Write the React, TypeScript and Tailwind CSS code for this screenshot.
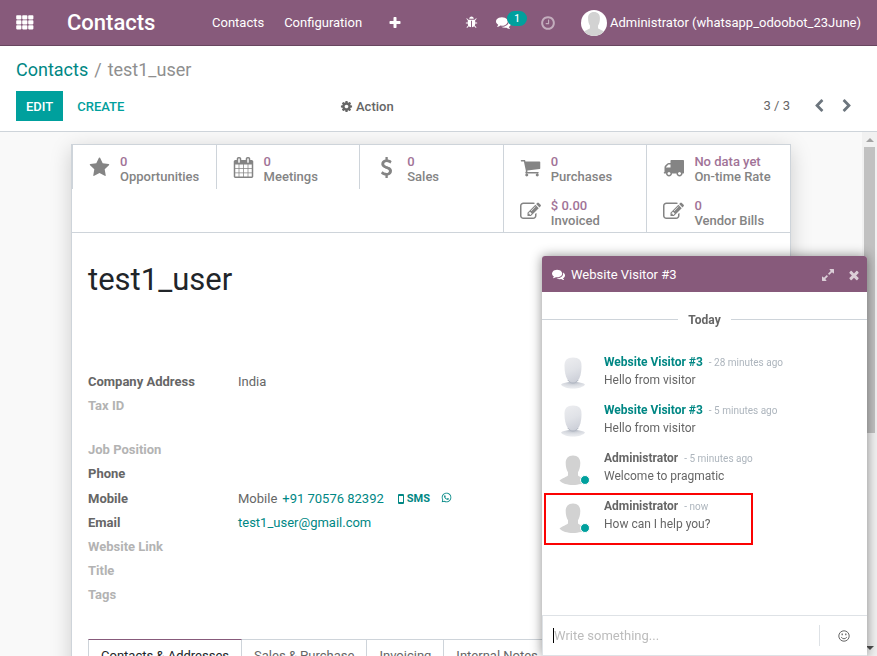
import React, { useId } from "react";
import { FaWhatsapp } from "react-icons/fa";

const ICONS = {
  star: "M1728 647q0 22-26 48l-363 354 86 500q1 7 1 20 0 21-10.5 35.5t-30.5 14.5q-19 0-40-12l-449-236-449 236q-22 12-40 12-21 0-31.5-14.5t-10.5-35.5q0-6 2-20l86-500-364-354q-25-27-25-48 0-37 56-46l502-73 225-455q19-41 49-41t49 41l225 455 502 73q56 9 56 46z",
  comments:
    "M1408 768q0 139-94 257t-256.5 186.5-353.5 68.5q-86 0-176-16-124 88-278 128-36 9-86 16h-3q-11 0-20.5-8t-11.5-21q-1-3-1-6.5t.5-6.5 2-6l2.5-5 3.5-5.5 4-5 4.5-5 4-4.5q5-6 23-25t26-29.5 22.5-29 25-38.5 20.5-44q-124-72-195-177t-71-224q0-139 94-257t256.5-186.5 353.5-68.5 353.5 68.5 256.5 186.5 94 257zm384 256q0 120-71 224.5t-195 176.5q10 24 20.5 44t25 38.5 22.5 29 26 29.5 23 25q1 1 4 4.5t4.5 5 4 5 3.5 5.5l2.5 5 2 6 .5 6.5-1 6.5q-3 14-13 22t-22 7q-50-7-86-16-154-40-278-128-90 16-176 16-271 0-472-132 58 4 88 4 161 0 309-45t264-129q125-92 192-212t67-254q0-77-23-152 129 71 204 178t75 230z",
  plus: "M1600 736v192q0 40-28 68t-68 28h-416v416q0 40-28 68t-68 28h-192q-40 0-68-28t-28-68v-416h-416q-40 0-68-28t-28-68v-192q0-40 28-68t68-28h416v-416q0-40 28-68t68-28h192q40 0 68 28t28 68v416h416q40 0 68 28t28 68z",
  clock:
    "M1024 544v448q0 14-9 23t-23 9h-320q-14 0-23-9t-9-23v-64q0-14 9-23t23-9h224v-352q0-14 9-23t23-9h64q14 0 23 9t9 23zm416 352q0-148-73-273t-198-198-273-73-273 73-198 198-73 273 73 273 198 198 273 73 273-73 198-198 73-273zm224 0q0 209-103 385.5t-279.5 279.5-385.5 103-385.5-103-279.5-279.5-103-385.5 103-385.5 279.5-279.5 385.5-103 385.5 103 279.5 279.5 103 385.5z",
  cog: "M1152 896q0-106-75-181t-181-75-181 75-75 181 75 181 181 75 181-75 75-181zm512-109v222q0 12-8 23t-20 13l-185 28q-19 54-39 91 35 50 107 138 10 12 10 25t-9 23q-27 37-99 108t-94 71q-12 0-26-9l-138-108q-44 23-91 38-16 136-29 186-7 28-36 28h-222q-14 0-24.5-8.5t-11.5-21.5l-28-184q-49-16-90-37l-141 107q-10 9-25 9-14 0-25-11-126-114-165-168-7-10-7-23 0-12 8-23 15-21 51-66.5t54-70.5q-27-50-41-99l-183-27q-13-2-21-12.5t-8-23.5v-222q0-12 8-23t19-13l186-28q14-46 39-92-40-57-107-138-10-12-10-24 0-10 9-23 26-36 98.5-107.5t94.5-71.5q13 0 26 10l138 107q44-23 91-38 16-136 29-186 7-28 36-28h222q14 0 24.5 8.5t11.5 21.5l28 184q49 16 90 37l142-107q9-9 24-9 13 0 25 10 129 119 165 170 7 8 7 22 0 12-8 23-15 21-51 66.5t-54 70.5q26 50 41 98l183 28q13 2 21 12.5t8 23.5z",
  left: "M1427 301l-531 531 531 531q19 19 19 45t-19 45l-166 166q-19 19-45 19t-45-19l-742-742q-19-19-19-45t19-45l742-742q19-19 45-19t45 19l166 166q19 19 19 45t-19 45z",
  right:
    "M1363 877l-742 742q-19 19-45 19t-45-19l-166-166q-19-19-19-45t19-45l531-531-531-531q-19-19-19-45t19-45l166-166q19-19 45-19t45 19l742 742q19 19 19 45t-19 45z",
  times:
    "M1490 1322q0 40-28 68l-136 136q-28 28-68 28t-68-28l-294-294-294 294q-28 28-68 28t-68-28l-136-136q-28-28-28-68t28-68l294-294-294-294q-28-28-28-68t28-68l136-136q28-28 68-28t68 28l294 294 294-294q28-28 68-28t68 28l136 136q28 28 28 68t-28 68l-294 294 294 294q28 28 28 68z",
  expand:
    "M883 1056q0 13-10 23l-332 332 144 144q19 19 19 45t-19 45-45 19h-448q-26 0-45-19t-19-45v-448q0-26 19-45t45-19 45 19l144 144 332-332q10-10 23-10t23 10l114 114q10 10 10 23zm781-864v448q0 26-19 45t-45 19-45-19l-144-144-332 332q-10 10-23 10t-23-10l-114-114q-10-10-10-23t10-23l332-332-144-144q-19-19-19-45t19-45 45-19h448q26 0 45 19t19 45z",
  cart: "M704 1536q0 52-38 90t-90 38-90-38-38-90 38-90 90-38 90 38 38 90zm896 0q0 52-38 90t-90 38-90-38-38-90 38-90 90-38 90 38 38 90zm128-1088v512q0 24-16.5 42.5t-40.5 21.5l-1044 122q13 60 13 70 0 16-24 64h920q26 0 45 19t19 45-19 45-45 19h-1024q-26 0-45-19t-19-45q0-11 8-31.5t16-36 21.5-40 15.5-29.5l-177-823h-204q-26 0-45-19t-19-45 19-45 45-19h256q16 0 28.5 6.5t19.5 15.5 13 24.5 8 26 5.5 29.5 4.5 26h1201q26 0 45 19t19 45z",
  truck:
    "M640 1408q0-52-38-90t-90-38-90 38-38 90 38 90 90 38 90-38 38-90zm-384-512h384v-256h-158q-13 0-22 9l-195 195q-9 9-9 22v30zm1280 512q0-52-38-90t-90-38-90 38-38 90 38 90 90 38 90-38 38-90zm256-1088v1024q0 15-4 26.5t-13.5 18.5-16.5 11.5-23.5 6-22.5 2-25.5 0-22.5-.5q0 106-75 181t-181 75-181-75-75-181h-384q0 106-75 181t-181 75-181-75-75-181h-64q-3 0-22.5.5t-25.5 0-22.5-2-23.5-6-16.5-11.5-13.5-18.5-4-26.5q0-26 19-45t45-19v-320q0-8-.5-35t0-38 2.5-34.5 6.5-37 14-30.5 22.5-30l198-198q19-19 50.5-32t58.5-13h160v-192q0-26 19-45t45-19h1024q26 0 45 19t19 45z",
  edit: "M888 1184l116-116-152-152-116 116v56h96v96h56zm440-720q-16-16-33 1l-350 350q-17 17-1 33t33-1l350-350q17-17 1-33zm80 594v190q0 119-84.5 203.5t-203.5 84.5h-832q-119 0-203.5-84.5t-84.5-203.5v-832q0-119 84.5-203.5t203.5-84.5h832q63 0 117 25 15 7 18 23 3 17-9 29l-49 49q-14 14-32 8-23-6-45-6h-832q-66 0-113 47t-47 113v832q0 66 47 113t113 47h832q66 0 113-47t47-113v-126q0-13 9-22l64-64q15-15 35-7t20 29zm-96-738l288 288-672 672h-288v-288zm444 132l-92 92-288-288 92-92q28-28 68-28t68 28l152 152q28 28 28 68t-28 68z",
  calendar:
    "M192 1664h288v-288h-288v288zm352 0h320v-288h-320v288zm-352-352h288v-320h-288v320zm352 0h320v-320h-320v320zm-352-384h288v-288h-288v288zm736 736h320v-288h-320v288zm-384-736h320v-288h-320v288zm768 736h288v-288h-288v288zm-384-352h320v-320h-320v320zm-352-864v-288q0-13-9.5-22.5t-22.5-9.5h-64q-13 0-22.5 9.5t-9.5 22.5v288q0 13 9.5 22.5t22.5 9.5h64q13 0 22.5-9.5t9.5-22.5zm736 864h288v-320h-288v320zm-384-384h320v-288h-320v288zm384 0h288v-288h-288v288zm32-480v-288q0-13-9.5-22.5t-22.5-9.5h-64q-13 0-22.5 9.5t-9.5 22.5v288q0 13 9.5 22.5t22.5 9.5h64q13 0 22.5-9.5t9.5-22.5zm384-64v1280q0 52-38 90t-90 38h-1408q-52 0-90-38t-38-90v-1280q0-52 38-90t90-38h128v-96q0-66 47-113t113-47h64q66 0 113 47t47 113v96h384v-96q0-66 47-113t113-47h64q66 0 113 47t47 113v96h128q52 0 90 38t38 90z",
  dollar:
    "M1362 1185q0 153-99.5 263.5t-258.5 136.5v175q0 14-9 23t-23 9h-135q-13 0-22.5-9.5t-9.5-22.5v-175q-66-9-127.5-31t-101.5-44.5-74-48-46.5-37.5-17.5-18q-17-21-2-41l103-135q7-10 23-12 15-2 24 9l2 2q113 99 243 125 37 8 74 8 81 0 142.5-43t61.5-122q0-28-15-53t-33.5-42-58.5-37.5-66-32-80-32.5q-39-16-61.5-25t-61.5-26.5-62.5-31-56.5-35.5-53.5-42.5-43.5-49-35.5-58-21-66.5-8.5-78q0-138 98-242t255-134v-180q0-13 9.5-22.5t22.5-9.5h135q14 0 23 9t9 23v176q57 6 110.5 23t87 33.5 63.5 37.5 39 29 15 14q17 18 5 38l-81 146q-8 15-23 16-14 3-27-7-3-3-14.5-12t-39-26.5-58.5-32-74.5-26-85.5-11.5q-95 0-155 43t-60 111q0 26 8.5 48t29.5 41.5 39.5 33 56 31 60.5 27 70 27.5q53 20 81 31.5t76 35 75.5 42.5 62 50 53 63.5 31.5 76.5 13 94z",
  bug: "M1696 960q0 26-19 45t-45 19h-224q0 171-67 290l208 209q19 19 19 45t-19 45q-18 19-45 19t-45-19l-198-197q-5 5-15 13t-42 28.5-65 36.5-82 29-97 13v-896h-128v896q-51 0-101.5-13.5t-87-33-66-39-43.5-32.5l-15-14-183 207q-20 21-48 21-24 0-43-16-19-18-20.5-44.5t15.5-46.5l202-227q-58-114-58-274h-224q-26 0-45-19t-19-45 19-45 45-19h224v-294l-173-173q-19-19-19-45t19-45 45-19 45 19l173 173h844l173-173q19-19 45-19t45 19 19 45-19 45l-173 173v294h224q26 0 45 19t19 45zm-480-576h-640q0-133 93.5-226.5t226.5-93.5 226.5 93.5 93.5 226.5z",
};

function Icon({ name, className }: { name: keyof typeof ICONS; className: string }) {
  return (
    <svg viewBox="0 0 1792 1792" className={`shrink-0 overflow-visible ${className}`} fill="currentColor" aria-hidden="true">
      <path d={ICONS[name]} />
    </svg>
  );
}

function AppsIcon() {
  return (
    <svg viewBox="0 0 18 15" className="h-[15px] w-[18px]" fill="currentColor" aria-hidden="true">
      {[0, 5, 10].map((y) =>
        [0, 6, 12].map((x) => <rect key={`${x}-${y}`} x={x + 0.2} y={y + 0.2} width="5.2" height="4.2" rx="0.8" />)
      )}
    </svg>
  );
}

function UserAvatar({ className }: { className: string }) {
  return (
    <svg viewBox="0 0 32 32" className={className} fill="#d2d2d2" aria-hidden="true">
      <path d="M16 2.500c4.800 0 7.300 3 7.300 7.500 0 3.700-1 7.300-2.300 9.200v3.300c1.200 1.500 6 2.600 8.500 5C27 30.500 21.500 32 16 32S5 30.500 2.500 27.500c2.500-2.400 7.300-3.500 8.500-5v-3.300C9.600 17.300 8.700 13.700 8.700 10c0-4.500 2.500-7.500 7.300-7.500z" />
    </svg>
  );
}

function VisitorAvatar() {
  const id = useId();
  return (
    <svg viewBox="0 0 32 34" className="h-[34px] w-8" aria-hidden="true">
      <defs>
        <linearGradient id={`${id}h`} x1="0.3" y1="0" x2="0.6" y2="1">
          <stop offset="0" stopColor="#ebecef" />
          <stop offset="0.5" stopColor="#e0e2e7" />
          <stop offset="1" stopColor="#cbced7" />
        </linearGradient>
        <radialGradient id={`${id}b`} cx="0.5" cy="0.1" r="0.7">
          <stop offset="0" stopColor="#b4b9c4" />
          <stop offset="0.5" stopColor="#d6d9df" />
          <stop offset="1" stopColor="#e6e8ec" />
        </radialGradient>
      </defs>
      <path d="M4 27.500c1.500-1.500 4.500-2 7.500-2.500h9c3 .5 6 1 7.500 2.500-1.500 2.500-6.500 4-12 4s-10.500-1.500-12-4z" fill={`url(#${id}b)`} />
      <path d="M16 .5c6 0 8.500 2.800 8.500 8 0 6.500-1 10.500-2.600 13.600C20.600 24.600 18.500 26 16 26s-4.600-1.400-5.900-3.900C8.500 19 7.500 15 7.500 8.500c0-5.200 2.500-8 8.500-8z" fill={`url(#${id}h)`} />
      <path d="M10.800 23C12.200 25 14 26 16 26s3.800-1 5.200-3" fill="none" stroke="#aeb4c0" strokeWidth="0.900" />
    </svg>
  );
}

type Stat = { icon: keyof typeof ICONS; value: string; label: string };

function StatButton({ icon, value, label }: Stat) {
  return (
    <button type="button" className="flex items-center border-l border-[#ced4da] text-left">
      <span className="flex w-[46px] justify-center pt-px pl-[7px]">
        <Icon name={icon} className="size-[21px] text-[#848484]" />
      </span>
      <span className="flex flex-col pt-1 pl-px text-[13px] leading-[15px] font-medium whitespace-nowrap text-[#848484]">
        <span className="text-[#a17397]">{value}</span>
        <span>{label}</span>
      </span>
    </button>
  );
}

const topStats: Stat[] = [
  { icon: "star", value: "0", label: "Opportunities" },
  { icon: "calendar", value: "0", label: "Meetings" },
  { icon: "dollar", value: "0", label: "Sales" },
  { icon: "cart", value: "0", label: "Purchases" },
  { icon: "truck", value: "No data yet", label: "On-time Rate" },
];

const invoiceStats: Stat[] = [
  { icon: "edit", value: "$ 0.00", label: "Invoiced" },
  { icon: "edit", value: "0", label: "Vendor Bills" },
];

function Field({ label, muted, children }: { label: string; muted?: boolean; children?: React.ReactNode }) {
  return (
    <div className="flex min-h-6 items-center">
      <dt className={`w-[150px] font-bold ${muted ? "text-[#b3b3b3]" : "text-[#666666]"}`}>{label}</dt>
      <dd className="flex items-center">{children}</dd>
    </div>
  );
}

function Message({ author, time, text, visitor }: { author: string; time: string; text: string; visitor?: boolean }) {
  return (
    <li className="flex h-12 pl-[15px]">
      <span className="relative mt-1 size-8 shrink-0">
        {visitor ? <VisitorAvatar /> : <UserAvatar className="size-8" />}
        {!visitor && <span className="absolute right-0 bottom-0 size-[10px] translate-x-px rounded-full border border-white bg-[#00a09d]" />}
      </span>
      <div className="ml-[15px] text-[12px] leading-[18px]">
        <p className="flex h-[18px] items-baseline gap-[6px]">
          <strong className={visitor ? "text-[#008784]" : "text-[#666666]"}>{author}</strong>
          <span className="text-[10px] text-[#adb5bd]">- {time}</span>
        </p>
        <p>{text}</p>
      </div>
    </li>
  );
}

function ChatWindow() {
  return (
    <section
      aria-label="Website Visitor #3"
      className="fixed right-[10px] bottom-0 flex h-[400px] w-[325px] flex-col rounded-t-[3px] bg-white shadow-[0_0_12px_rgba(0,0,0,0.45)]"
    >
      <header className="flex h-9 shrink-0 items-center rounded-t-[3px] bg-[#875a7b] px-[10px] pt-px text-white">
        <Icon name="comments" className="size-[13px]" />
        <h2 className="ml-[6px] flex-1">Website Visitor #3</h2>
        <button type="button" aria-label="Open in Discuss" className="text-white/70">
          <Icon name="expand" className="size-[14px]" />
        </button>
        <button type="button" aria-label="Close chat" className="-mr-1 ml-3 text-white/70">
          <Icon name="times" className="size-[14px]" />
        </button>
      </header>
      <div className="flex-1">
        <div className="mt-[15px] flex items-center gap-[10px]">
          <span className="h-px flex-1 bg-[#ced4da]" />
          <strong className="pt-px text-[12px] leading-6 text-[#666666]">Today</strong>
          <span className="h-px flex-1 bg-[#ced4da]" />
        </div>
        <ul className="relative mt-[21px]">
          <Message visitor author="Website Visitor #3" time="28 minutes ago" text="Hello from visitor" />
          <Message visitor author="Website Visitor #3" time="5 minutes ago" text="Hello from visitor" />
          <Message author="Administrator" time="5 minutes ago" text="Welcome to pragmatic" />
          <Message author="Administrator" time="now" text="How can I help you?" />
          <li aria-hidden="true" className="absolute top-[140px] left-[2px] h-[52px] w-[209px] border-2 border-[#fb0303]" />
        </ul>
      </div>
      <div className="flex h-[41px] shrink-0 items-center border-y border-l border-[#dee2e6]">
        <span aria-hidden="true" className="ml-[10px] h-[15px] w-px bg-black" />
        <input aria-label="Message" placeholder="Write something..." className="min-w-0 flex-1 outline-none placeholder:text-[#bcbcbc]" />
        <button type="button" aria-label="Add an emoji" className="flex h-[21px] w-12 items-center justify-center border-l border-[#dee2e6] text-[#666666]">
          <svg viewBox="0 0 12 12" className="size-3" fill="none" stroke="currentColor" aria-hidden="true">
            <circle cx="6" cy="6" r="5.2" />
            <path d="M3.200 7.200Q6 10.400 8.800 7.200" />
            <path d="M4.200 3.600v1.600M7.800 3.600v1.600" strokeWidth="1.300" />
          </svg>
        </button>
      </div>
    </section>
  );
}

export default function App() {
  return (
    <div className="flex h-screen flex-col overflow-hidden bg-white font-[Roboto,sans-serif] text-[13px] text-[#666666]">
      <header className="flex h-[46px] shrink-0 items-center justify-between border-b border-[#68465f] bg-[#875a7b] px-4 text-white">
        <nav className="flex items-center whitespace-nowrap">
          <button type="button" aria-label="Applications">
            <AppsIcon />
          </button>
          <a href="#contacts" className="ml-[33px] w-[145px] text-[22px] leading-8 font-medium">
            Contacts
          </a>
          <a href="#contacts">Contacts</a>
          <a href="#configuration" className="ml-5">
            Configuration
          </a>
          <button type="button" aria-label="Add" className="ml-[26px]">
            <Icon name="plus" className="size-[14px]" />
          </button>
        </nav>
        <div className="flex items-center whitespace-nowrap">
          <button type="button" aria-label="Debug" className="mr-[18px]">
            <Icon name="bug" className="size-[13px]" />
          </button>
          <button type="button" aria-label="Messages" className="relative mr-[29px]">
            <Icon name="comments" className="size-[15px]" />
            <span className="absolute -top-1 left-[11px] flex h-[15px] w-5 items-center justify-center rounded-full bg-[#00a09d] text-[10px] leading-none font-medium">
              1
            </span>
          </button>
          <button type="button" aria-label="Activities" className="mr-[25px] text-white/50">
            <Icon name="clock" className="size-4" />
          </button>
          <button type="button" className="flex items-center gap-[3px]">
            <span className="size-[26px] overflow-hidden rounded-full bg-white">
              <UserAvatar className="size-[26px]" />
            </span>
            Administrator (whatsapp_odoobot_23June)
          </button>
        </div>
      </header>

      <div className="shrink-0 border-b border-[#ced4da] px-4 pt-3 pb-[10px]">
        <nav aria-label="Breadcrumb" className="flex gap-[6px] text-[18px] leading-6 text-[#8f8f8f]">
          <a href="#contacts" className="text-[#008784]">
            Contacts
          </a>
          <span>/</span>
          <span>test1_user</span>
        </nav>
        <div className="mt-[9px] flex h-[30px] items-center">
          <div className="flex h-full w-[324px] items-center">
            <button type="button" className="h-full bg-[#00a09d] px-[10px] pt-px font-medium text-white">
              EDIT
            </button>
            <button type="button" className="ml-1 h-full px-[10px] pt-px font-medium text-[#00a09d]">
              CREATE
            </button>
          </div>
          <button type="button" className="flex items-center gap-[3px] pt-px font-medium">
            <Icon name="cog" className="size-[13px]" />
            Action
          </button>
          <span className="ml-auto">3 / 3</span>
          <button type="button" aria-label="Previous" className="ml-[22px] text-[#6c757d]">
            <Icon name="left" className="size-[14px]" />
          </button>
          <button type="button" aria-label="Next" className="mr-[7px] ml-[14px] text-[#6c757d]">
            <Icon name="right" className="size-[14px]" />
          </button>
        </div>
      </div>

      <div className="flex min-h-0 flex-1">
        <main className="min-w-0 flex-1 overflow-hidden bg-[#f9f9f9] pt-3">
          <div className="mx-auto min-h-[700px] w-full max-w-[720px] border border-[#ced4da] bg-white shadow-[0_5px_20px_rgba(0,0,0,0.18)]">
            <div className="grid grid-cols-5 grid-rows-[44px_43px] border-b border-[#ced4da]">
              {topStats.map((s) => (
                <StatButton key={s.label} {...s} />
              ))}
              <div className="col-span-3" />
              {invoiceStats.map((s) => (
                <StatButton key={s.label} {...s} />
              ))}
            </div>
            <div className="px-4 pt-[29px]">
              <h1 className="text-[31px] leading-9 text-[#212529]">test1_user</h1>
              <dl className="mt-[72px]">
                <Field label="Company Address">India</Field>
                <Field label="Tax ID" muted />
              </dl>
              <dl className="mt-5">
                <Field label="Job Position" muted />
                <Field label="Phone" />
                <Field label="Mobile">
                  <div className="flex h-[25px] items-center pt-px">
                    <span>Mobile</span>
                    <a href="tel:+917057682392" className="ml-[5px] text-[#008784]">
                      +91 70576 82392
                    </a>
                    <button type="button" className="ml-[14px] flex items-center gap-[3px] text-[11px] font-bold text-[#008784]">
                      <svg viewBox="0 0 6 10" className="h-[10px] w-[6px]" aria-hidden="true">
                        <path fill="currentColor" fillRule="evenodd" d="M1 0h4q1 0 1 1v8q0 1-1 1H1q-1 0-1-1V1q0-1 1-1zM1 2v6h4V2z" />
                      </svg>
                      SMS
                    </button>
                    <a href="#whatsapp" aria-label="WhatsApp" className="-mt-[3px] ml-[11px] text-[#008784]">
                      <FaWhatsapp className="size-[11px]" />
                    </a>
                  </div>
                </Field>
                <Field label="Email">
                  <a href="mailto:test1_user@gmail.com" className="text-[#008784]">
                    test1_user@gmail.com
                  </a>
                </Field>
                <Field label="Website Link" muted />
                <Field label="Title" muted />
                <Field label="Tags" muted />
              </dl>
              <div role="tablist" className="mt-8 flex border-t border-[#ced4da]">
                <button type="button" role="tab" aria-selected="true" className="-mt-px h-[33px] border-x border-t border-x-[#ced4da] border-t-[#875a7b] px-3 text-[#212529]">
                  Contacts &amp; Addresses
                </button>
                {["Sales & Purchase", "Invoicing", "Internal Notes"].map((t) => (
                  <button key={t} type="button" role="tab" aria-selected="false" className="h-8 border-r border-[#ced4da] px-3">
                    {t}
                  </button>
                ))}
              </div>
            </div>
          </div>
        </main>
        <div aria-hidden="true" className="flex w-[15px] shrink-0 flex-col items-center justify-between bg-[#f1f1f1] pt-[6px] pb-[6px]">
          <div className="flex flex-col items-center gap-[5px]">
            <svg viewBox="0 0 8 4" className="h-1 w-2" fill="#a3a3a3">
              <path d="M0 4l4-4 4 4z" />
            </svg>
            <div className="h-[286px] w-[11px] bg-[#c1c1c1]" />
          </div>
          <svg viewBox="0 0 8 4" className="h-1 w-2" fill="#505050">
            <path d="M0 0l4 4 4-4z" />
          </svg>
        </div>
      </div>
      <ChatWindow />
    </div>
  );
}
